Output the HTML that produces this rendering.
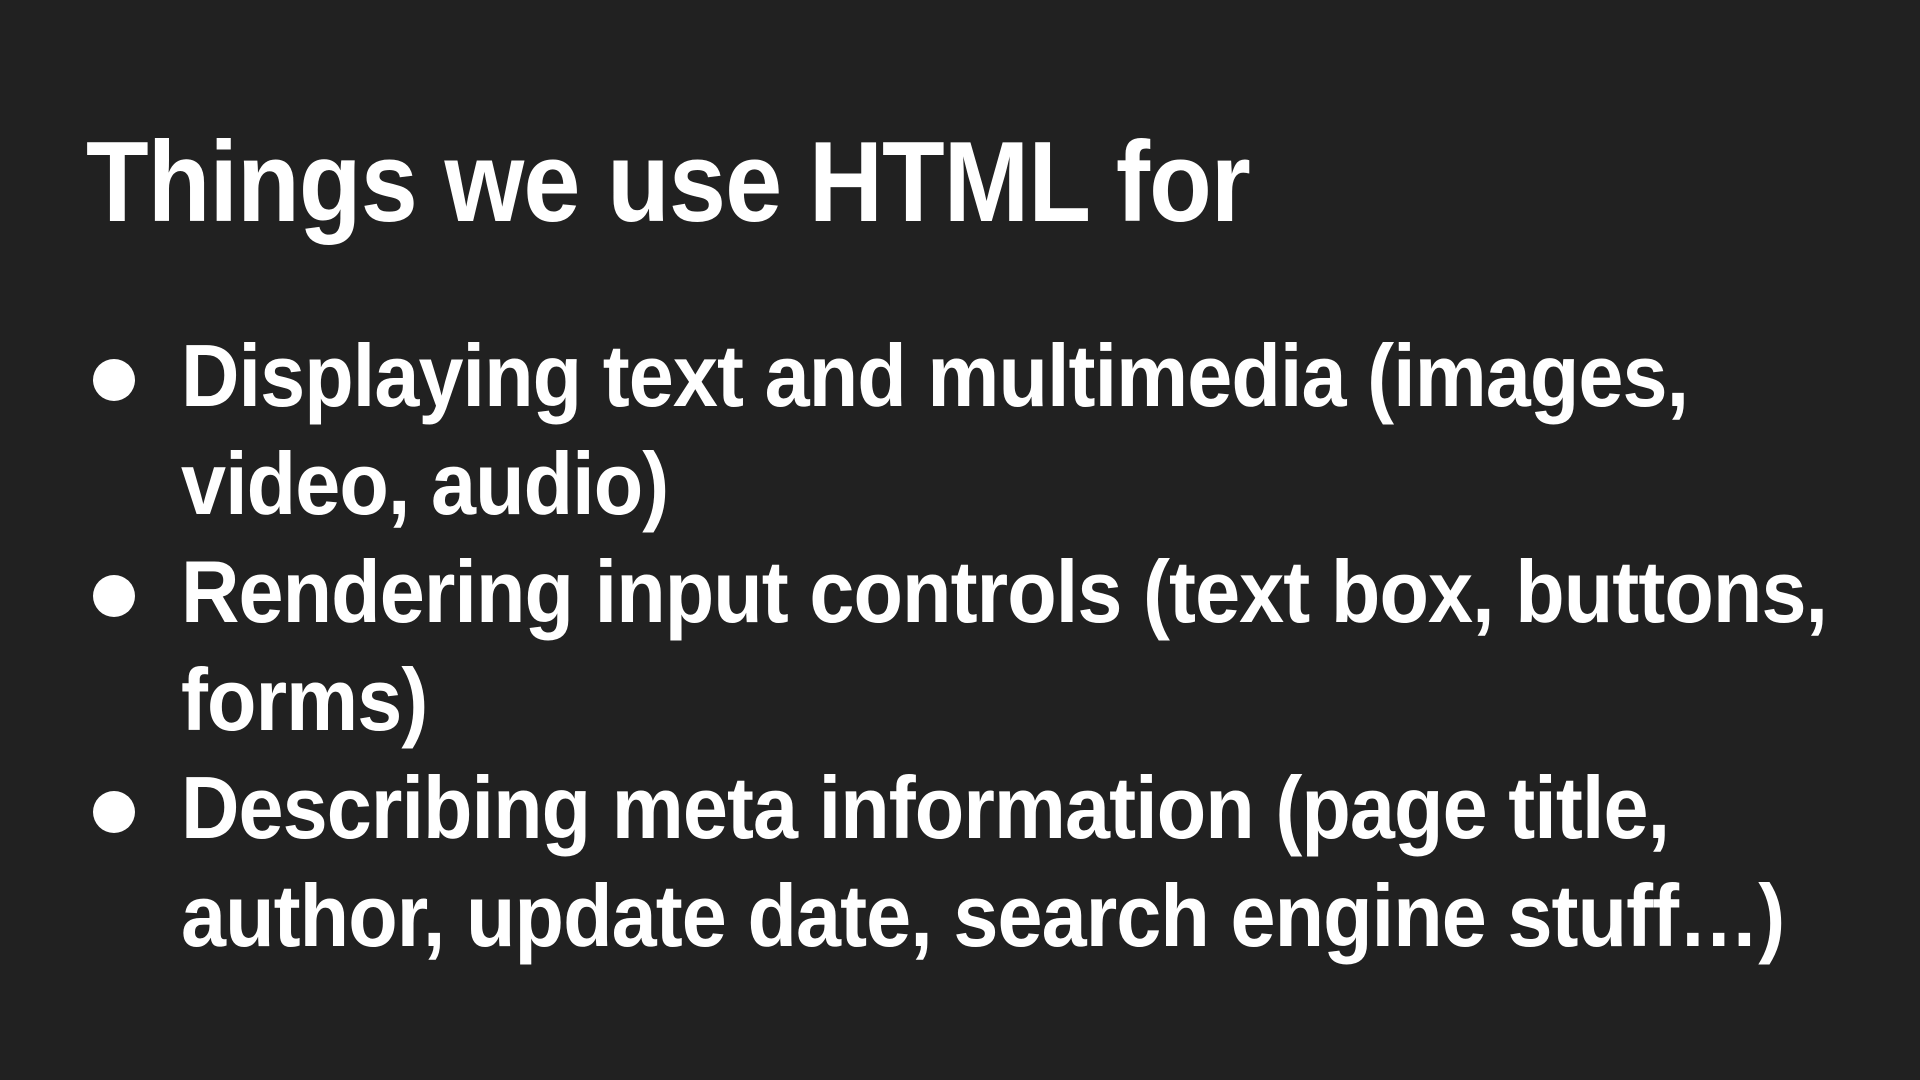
<!DOCTYPE html>
<html><head><meta charset="utf-8"><style>
html,body{margin:0;padding:0;background:#212121;width:1920px;height:1080px;overflow:hidden}
body{font-family:"Liberation Sans",sans-serif;font-weight:bold;color:#fff;position:relative}
.t{position:absolute;left:86px;top:118px;font-size:114px;line-height:130px;white-space:nowrap;transform:scaleX(0.9);transform-origin:0 0;letter-spacing:-1px}
.l{position:absolute;left:181px;font-size:88px;line-height:108px;white-space:nowrap;transform:scaleX(0.92);transform-origin:0 0;letter-spacing:-1px}
.d{position:absolute;left:93px;width:42px;height:42px;border-radius:50%;background:#fff}
</style></head><body>
<div class="t">Things we use HTML for</div>
<div class="d" style="top:359px"></div>
<div class="l" style="top:322px">Displaying text and multimedia (images,</div>
<div class="l" style="top:430px">video, audio)</div>
<div class="d" style="top:575px"></div>
<div class="l" style="top:538px">Rendering input controls (text box, buttons,</div>
<div class="l" style="top:646px">forms)</div>
<div class="d" style="top:791px"></div>
<div class="l" style="top:754px">Describing meta information (page title,</div>
<div class="l" style="top:862px">author, update date, search engine stuff…)</div>
</body></html>
